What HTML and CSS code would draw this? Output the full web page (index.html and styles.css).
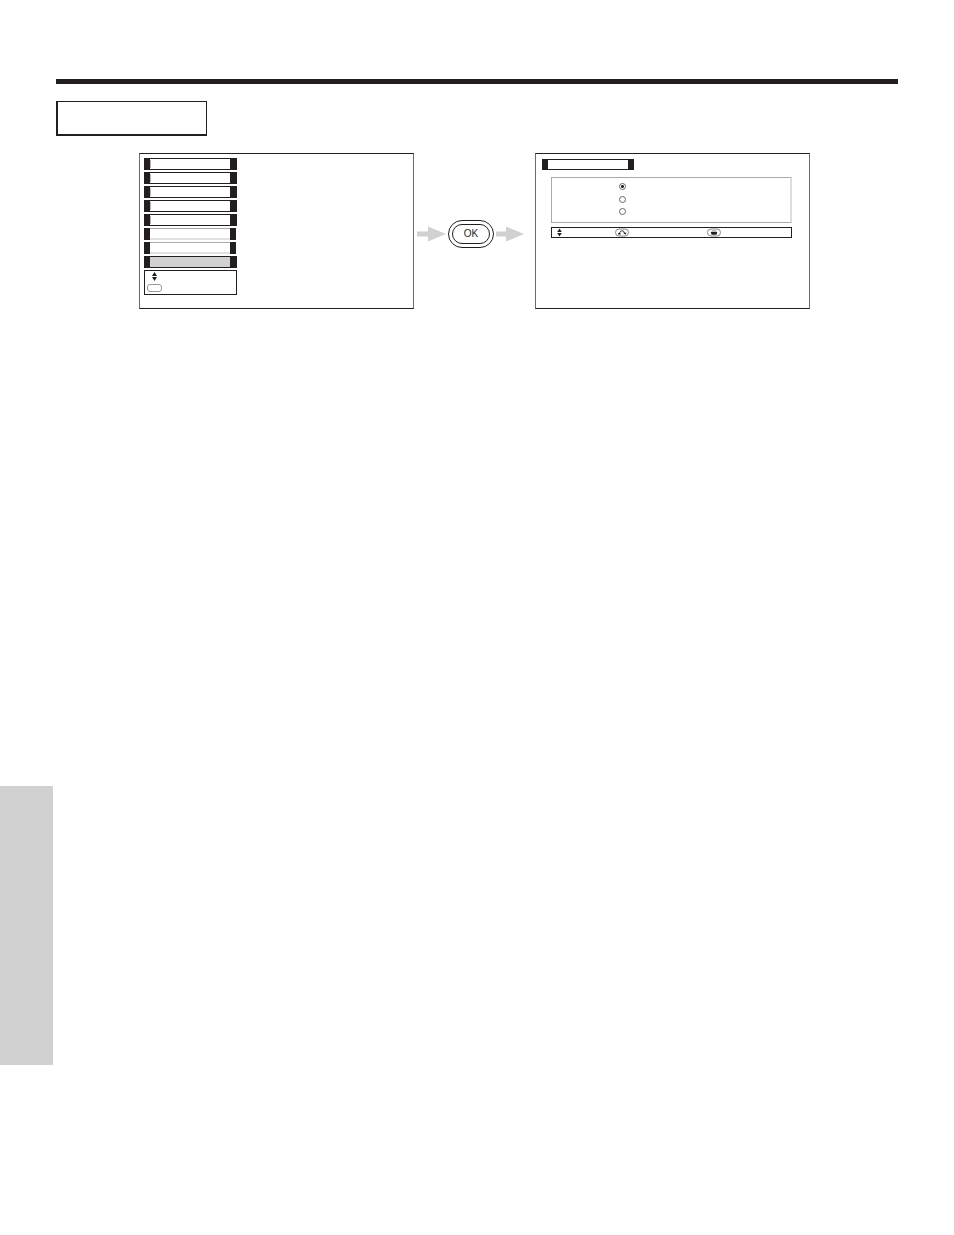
FILE: index.html
```html
<!DOCTYPE html>
<html lang="en">
<head>
  <meta charset="UTF-8">
  <meta name="viewport" content="width=device-width, initial-scale=1.0">
  <title>Menu</title>
  <link rel="stylesheet" href="styles.css">
</head>
<body>
  <main>
    <header class="heading"></header>
    <div class="section-title"></div>

    <div class="figure">
      <div class="screen menu-screen">
        <ul class="menu">
          <li class="item"></li>
          <li class="item"></li>
          <li class="item"></li>
          <li class="item"></li>
          <li class="item"></li>
          <li class="item light"></li>
          <li class="item light"></li>
          <li class="item selected"></li>
        </ul>
        <div class="menu-help">
          <svg class="updown" width="5" height="9" viewBox="0 0 5 9"><path d="M2.5 0L5 4H0zM2.5 9L5 5H0z"/></svg>
          <span class="key"></span>
        </div>
      </div>

      <div class="step">
        <svg class="arrow" width="29" height="16" viewBox="0 0 29 16"><path d="M0 5.5h11V0.5L29 8L11 15.5V10.5H0z"/></svg>
        <button type="button" class="ok"><span>OK</span></button>
        <svg class="arrow" width="29" height="16" viewBox="0 0 29 16"><path d="M0 5.5h10V0.5L28 8L10 15.5V10.5H0z"/></svg>
      </div>

      <div class="screen option-screen">
        <div class="item option-title"></div>
        <form class="options">
          <input type="radio" name="option" aria-label="Option 1" checked>
          <input type="radio" name="option" aria-label="Option 2">
          <input type="radio" name="option" aria-label="Option 3">
        </form>
        <div class="help-bar">
          <svg class="updown" width="5" height="9" viewBox="0 0 5 9"><path d="M2.5 0.5L4.8 4H0.2zM2.5 8.5L4.8 5H0.2z"/></svg>
          <svg class="back" width="14" height="9" viewBox="0 0 14 9">
            <rect class="pill" x="0.5" y="1" width="13" height="7" rx="3.5"/>
            <path class="line" d="M4.5 6C4.5 2.2 8.5 2 9.5 4.5"/>
            <path d="M3 5.2h2.6V6.6H3zM7.6 4.4L11.4 4.8L10.6 6.8z"/>
          </svg>
          <svg class="exit" width="14" height="9" viewBox="0 0 14 9">
            <rect class="pill" x="0.5" y="1" width="13" height="7" rx="3.5"/>
            <path class="screen-top" d="M4.5 3h5"/>
            <path d="M3.8 4h6.4L9.5 6.8h-5z"/>
          </svg>
        </div>
      </div>
    </div>
  </main>

  <aside class="side-tab"></aside>
</body>
</html>
```
FILE: styles.css
```css
* {
  box-sizing: border-box;
}

body {
  margin: 0;
  background-color: #fff;
  color: #231f20;
  font-family: "Liberation Sans", Arial, sans-serif;
}

main {
  padding: 79px 56px 0;
}

svg {
  display: block;
  fill: #231f20;
}

.heading {
  height: 5px;
  background-color: #231f20;
}

.section-title {
  width: 151px;
  height: 35px;
  margin-top: 17px;
  border: solid #231f20;
  border-width: 1px 1px 2px 2px;
}

.figure {
  display: flex;
  margin: 17px 88px 0 83px;
}

.screen {
  flex: 1 1 275px;
  height: 156px;
  border: 1px solid #231f20;
  border-left-color: #6d6a6b;
  border-right-color: #6d6a6b;
}

.menu-screen {
  padding: 4px;
}

.menu {
  display: flex;
  flex-direction: column;
  gap: 2px;
  width: 93px;
  margin: 0;
  padding: 0;
  list-style: none;
}

.item {
  height: 12px;
  border: solid #231f20;
  border-width: 1px 7px 1px 6px;
  /* thin grey edge beside the left cap */
  background: linear-gradient(#b5b5b5, #b5b5b5) 0 center / 1px 8px no-repeat;
}

.item.light {
  width: 92px;
  border-width: 0 6px;
  background: linear-gradient(#ababab 0 1px, #fff 1px 10px, #e0e0e0 10px);
}

.item.selected {
  background: #d1d1d1;
}

.menu-help {
  display: flex;
  flex-direction: column;
  gap: 3px;
  width: 93px;
  height: 25px;
  margin-top: 2px;
  padding: 1px 2px;
  border: 1px solid #231f20;
}

.menu-help .updown {
  margin-left: 5px;
}

.key {
  width: 15px;
  height: 8px;
  border: 1px solid #999;
  border-radius: 3px;
}

.step {
  display: flex;
  flex: none;
  align-items: center;
  gap: 2px;
  width: 121px;
  padding: 5px 0 0 3px;
}

.arrow {
  fill: #d1d1d1;
}

.ok {
  width: 46px;
  height: 28px;
  padding: 3px;
  border: 1px solid #231f20;
  border-radius: 14px;
  background: #fff;
  color: #231f20;
  font: 10px "Liberation Sans", Arial, sans-serif;
}

.ok span {
  display: block;
  height: 20px;
  border: 1px solid #231f20;
  border-radius: 10px;
  line-height: 18px;
}

.option-screen {
  padding: 5px 17px 0 15px;
}

.option-title {
  width: 92px;
  height: 11px;
  margin-left: -9px;
  border-width: 1px 6px;
  background: none;
}

.options {
  display: flex;
  flex-direction: column;
  justify-content: space-between;
  height: 46px;
  margin-top: 7px;
  padding: 5px 0 7px 67px;
  border: 1px solid #aaa;
  border-right: 2px solid #ddd;
}

.options input {
  appearance: none;
  width: 7px;
  height: 7px;
  margin: 0;
  border: 1px solid #666;
  border-radius: 50%;
}

.options input:checked {
  background: radial-gradient(#231f20 0 1px, #fff 2px);
}

.help-bar {
  display: flex;
  align-items: center;
  height: 11px;
  margin-top: 4px;
  padding-left: 5px;
  border: 1px solid #231f20;
}

.back {
  margin-left: 53px;
}

.exit {
  margin-left: 78px;
}

.pill {
  fill: none;
  stroke: #888;
}

.line {
  fill: none;
  stroke: #231f20;
}

.screen-top {
  stroke: #888;
}

.side-tab {
  width: 53px;
  height: 279px;
  margin-top: 477px;
  background-color: #d1d1d1;
}
```
